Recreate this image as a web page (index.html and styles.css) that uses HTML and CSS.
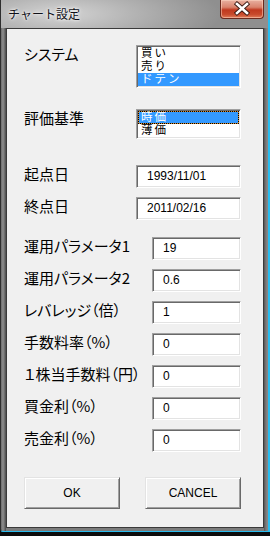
FILE: index.html
```html
<!DOCTYPE html>
<html lang="ja">
<head>
    <meta charset="UTF-8">
    <title>チャート設定</title>
    <link rel="stylesheet" href="styles.css">
</head>
<body>
    <div class="window">
        <div class="titlebar">
            <span class="title">チャート設定</span>
            <div class="close">
                <svg width="44" height="19" viewBox="0 0 44 19">
                    <path d="M17 5 L27 14 M27 5 L17 14" stroke="#3a1a14" stroke-width="4.4" stroke-linecap="square"/>
                    <path d="M17 5 L27 14 M27 5 L17 14" stroke="#fff" stroke-width="2.6" stroke-linecap="square"/>
                </svg>
            </div>
        </div>

        <div class="client">
            <div class="row row-system">
                <span class="label">システム</span>
                <div class="listbox list-system">
                    <div class="item">買い</div>
                    <div class="item">売り</div>
                    <div class="item selected">ドテン</div>
                </div>
            </div>

            <div class="row row-eval">
                <span class="label">評価基準</span>
                <div class="listbox list-eval">
                    <div class="item selected focused">時価</div>
                    <div class="item">薄価</div>
                </div>
            </div>

            <div class="row row-date">
                <span class="label">起点日</span>
                <div class="textbox date">1993/11/01</div>
            </div>
            <div class="row row-date last-date">
                <span class="label">終点日</span>
                <div class="textbox date">2011/02/16</div>
            </div>

            <div class="row row-param">
                <span class="label">運用パラメータ1</span>
                <div class="textbox param">19</div>
            </div>
            <div class="row row-param">
                <span class="label">運用パラメータ2</span>
                <div class="textbox param">0.6</div>
            </div>
            <div class="row row-param">
                <span class="label">レバレッジ（倍）</span>
                <div class="textbox param">1</div>
            </div>
            <div class="row row-param">
                <span class="label">手数料率（%）</span>
                <div class="textbox param">0</div>
            </div>
            <div class="row row-param">
                <span class="label">１株当手数料（円）</span>
                <div class="textbox param">0</div>
            </div>
            <div class="row row-param">
                <span class="label">買金利（%）</span>
                <div class="textbox param">0</div>
            </div>
            <div class="row row-param">
                <span class="label">売金利（%）</span>
                <div class="textbox param">0</div>
            </div>

            <div class="buttons">
                <div class="button">OK</div>
                <div class="button">CANCEL</div>
            </div>
        </div>
    </div>
</body>
</html>
```

FILE: styles.css
```css
* {
    box-sizing: border-box;
}

html, body {
    margin: 0;
    padding: 0;
}

body {
    background: #0c0c0c;
    font-family: "Noto Sans CJK JP", "Noto Sans", sans-serif;
}

.window {
    width: 270px;
    height: 532px;
    display: flex;
    flex-direction: column;
    padding: 0 4px 3px 5px;
    border-left: 1px solid #2e2e2e;
    border-right: 2px solid #27bdf0;
    border-bottom: 1px solid #27bdf0;
    border-bottom-left-radius: 3px;
    background:
        linear-gradient(90deg, #6c6c6c 0, #8e8e8e 2px, #7a7a7a 3px, #4a4a4a 5px, transparent 5px, transparent calc(100% - 4px), #555 calc(100% - 4px), #7a7a7a calc(100% - 2px), #8a8a8a 100%),
        #7c7c7c;
}

/* title bar */
.titlebar {
    height: 28px;
    flex: none;
    display: flex;
    align-items: flex-start;
    margin: 0 -4px 0 -5px;
    padding: 0 4px 0 7px;
    background: radial-gradient(ellipse 160px 40px at 60px 14px, #d4d4d4 0%, #b4b4b4 45%, #8f8f8f 100%);
}

.title {
    padding-top: 6px;
    font-size: 12px;
    line-height: 15px;
    color: #101018;
    text-shadow: 0 0 4px #fff, 0 0 2px #fff;
}

.close {
    margin-left: auto;
    width: 44px;
    height: 19px;
    border: 1px solid #6b2a1e;
    border-top: none;
    border-radius: 0 0 4px 4px;
    background: linear-gradient(#e8b0a0 0, #d9836d 40%, #c0391f 55%, #c84a2c 80%, #e07c5a 100%);
    box-shadow: inset 0 0 0 1px rgba(255, 220, 200, 0.5);
    overflow: hidden;
}

.close svg {
    display: block;
    margin: -1px 0 0 -1px;
}

/* client area */
.client {
    height: 500px;
    flex: none;
    border: 1px solid #3a3a3a;
    background: #f0f0f0;
    padding: 16px 22px 0 17px;
}

.row {
    display: flex;
    justify-content: space-between;
    align-items: flex-start;
}

.label {
    font-size: 15px;
    line-height: 17px;
    color: #000;
    font-feature-settings: "palt";
    white-space: nowrap;
}

.row-system {
    margin-bottom: 21px;
}

.row-eval {
    margin-bottom: 26px;
}

.row-date,
.row-param {
    margin-bottom: 9px;
}

.last-date {
    margin-bottom: 17px;
}

/* list boxes */
.listbox {
    width: 105px;
    background: #fff;
    border: 1px solid;
    border-color: #a0a0a0 #fff #fff #a0a0a0;
    box-shadow: inset 1px 1px 0 #696969, inset -1px -1px 0 #e3e3e3;
    padding: 1px;
}

.list-system {
    height: 43px;
}

.list-eval {
    height: 30px;
}

.item {
    height: 13px;
    padding-left: 3px;
    font-family: "Liberation Sans", "Noto Sans CJK JP", sans-serif;
    font-size: 11.5px;
    line-height: 13px;
    letter-spacing: 2px;
    color: #000;
    white-space: nowrap;
}

.item.selected {
    background: #3399ff;
    color: #fff;
}

.item.focused {
    border: 1px dotted #000;
    background: linear-gradient(#3399ff, #3399ff) padding-box, #d98a2a border-box;
    padding-left: 2px;
    line-height: 11px;
}

/* text boxes */
.textbox {
    height: 23px;
    background: #fff;
    border: 1px solid;
    border-color: #a0a0a0 #fff #fff #a0a0a0;
    box-shadow: inset 1px 1px 0 #696969, inset -1px -1px 0 #e3e3e3;
    padding-left: 10px;
    font-family: "Liberation Sans", Arial, sans-serif;
    font-size: 12px;
    line-height: 21px;
    color: #000;
}

.date {
    width: 105px;
}

.param {
    width: 89px;
}

/* buttons */
.buttons {
    display: flex;
    justify-content: space-between;
    margin-top: 25px;
}

.button {
    width: 96px;
    height: 32px;
    border: 1px solid;
    border-color: #e3e3e3 #696969 #696969 #e3e3e3;
    box-shadow: inset 1px 1px 0 #fff, inset -1px -1px 0 #a0a0a0;
    background: #f0f0f0;
    display: flex;
    align-items: center;
    justify-content: center;
    font-family: "Liberation Sans", Arial, sans-serif;
    font-size: 12px;
    color: #000;
}
```
